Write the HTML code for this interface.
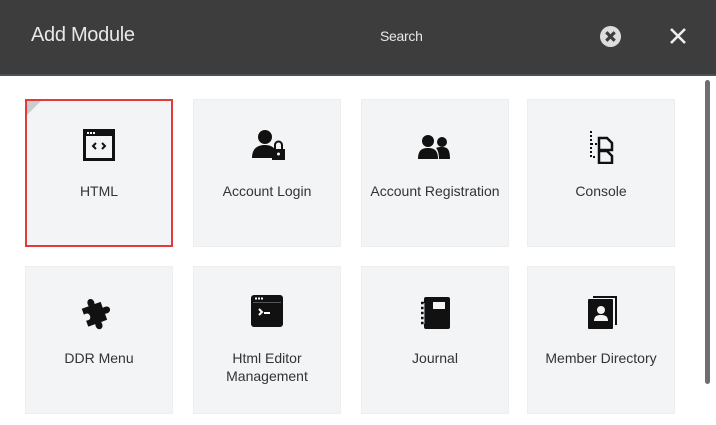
<!DOCTYPE html>
<html><head><style>
body{margin:0;width:716px;height:425px;background:#fff;overflow:hidden;font-family:"Liberation Sans",sans-serif;position:relative}
.hd{position:absolute;left:0;top:0;width:716px;height:74px;background:#3d3d3d;border-bottom:2px solid #4a5257}
.t{position:absolute;color:#e8e8e8}
.tile{position:absolute;width:148px;height:148px;background:#f3f4f5;border:1px solid #eceeef;box-sizing:border-box}
.tile svg{position:absolute;left:58px;top:28px}
.lb{position:absolute;left:0;width:100%;top:82px;text-align:center;font-size:14px;color:#333;line-height:18px}
.sel{border:2px solid #e53a3a}
.sb{position:absolute;left:705px;top:80px;width:5px;height:304px;background:#6e6e6e;border-radius:3px}
</style></head><body>
<div class="hd">
<div class="t" style="left:31px;top:24px;font-size:20px;letter-spacing:-0.3px">Add Module</div>
<div class="t" style="left:380px;top:28px;font-size:14px;letter-spacing:-0.3px">Search</div>
<svg style="position:absolute;left:600px;top:26px" width="21" height="21" viewBox="0 0 20 20"><circle cx="10" cy="10" r="10" fill="#ddd"/><path d="M6 6L14 14M14 6L6 14" stroke="#3d3d3d" stroke-width="3"/></svg>
<svg style="position:absolute;left:669px;top:27px" width="18" height="18" viewBox="0 0 18 18"><path d="M2 2L16 16M16 2L2 16" stroke="#eee" stroke-width="2.6"/></svg>
</div>
<div class="sb"></div>

<div class="tile sel" style="left:25px;top:99px"><div style="position:absolute;left:0;top:0;width:0;height:0;border-top:14px solid #ccc;border-right:14px solid transparent"></div>
<svg width="32" height="32" viewBox="0 0 32 32" style="left:56px;top:28px"><rect x="1.5" y="1.5" width="29" height="29" fill="none" stroke="#111" stroke-width="3"/><rect x="1" y="1" width="30" height="6" fill="#111"/><rect x="4" y="3" width="2" height="2" fill="#fff"/><rect x="7" y="3" width="2" height="2" fill="#fff"/><rect x="10" y="3" width="2" height="2" fill="#fff"/><path d="M13 14L10 17L13 20M19 14L22 17L19 20" stroke="#111" stroke-width="2" fill="none"/></svg>
<div class="lb" style="top:81px">HTML</div></div>

<div class="tile" style="left:193px;top:99px">
<svg width="36" height="34" viewBox="0 0 36 34"><circle cx="13" cy="9" r="7" fill="#111"/><path d="M0 30C0 20 6 17 13 17C18 17 22 19 23 22V30Z" fill="#111"/><rect x="20" y="21" width="13" height="11" fill="#111"/><path d="M23 21V17a3.5 3.5 0 0 1 7 0V21" stroke="#111" stroke-width="2" fill="none"/><circle cx="26.5" cy="26" r="1.5" fill="#f3f4f5"/></svg>
<div class="lb">Account Login</div></div>

<div class="tile" style="left:361px;top:99px">
<svg width="34" height="30" viewBox="0 0 34 30" style="left:56px;top:34px"><circle cx="10" cy="7" r="6" fill="#111"/><path d="M0 25C0 16 4 14 10 14S20 16 20 25Z" fill="#111"/><circle cx="24" cy="8" r="5" fill="#111"/><path d="M21 25C21 18 19 15 18 14C20 13 22 13 24 13C30 13 32 16 32 25Z" fill="#111"/></svg>
<div class="lb">Account Registration</div></div>

<div class="tile" style="left:527px;top:99px">
<svg width="30" height="34" viewBox="0 0 30 34" style="left:60px;top:30px"><path d="M3 1V27H9M3 14H9" stroke="#111" stroke-width="2" stroke-dasharray="2 2" fill="none"/><path d="M11 8H19L24 13V20H11Z M11 21H19L24 26V33H11Z" stroke="#111" stroke-width="2.5" fill="none"/></svg>
<div class="lb">Console</div></div>

<div class="tile" style="left:25px;top:266px">
<svg width="36" height="36" viewBox="0 0 34 34" style="left:55px;top:28px"><path d="M3 8H10C9 4 11 2 13 2S17 4 16 8H22V14C26 13 28 15 28 17S26 21 22 20V26H16C17 30 15 32 13 32S9 30 10 26H3V20C7 21 8 19 8 17S7 13 3 14Z" fill="#111" transform="rotate(-20 16 17)"/></svg>
<div class="lb">DDR Menu</div></div>

<div class="tile" style="left:193px;top:266px">
<svg width="32" height="32" viewBox="0 0 32 32" style="left:57px;top:28px"><rect x="0" y="0" width="32" height="32" rx="3" fill="#111"/><rect x="4" y="2.5" width="2" height="2" fill="#fff"/><rect x="7" y="2.5" width="2" height="2" fill="#fff"/><rect x="10" y="2.5" width="2" height="2" fill="#fff"/><rect x="2" y="7" width="28" height="1" fill="#555"/><path d="M8 14L11 17L8 20" stroke="#fff" stroke-width="2" fill="none"/><rect x="13" y="17" width="6" height="2" fill="#fff"/></svg>
<div class="lb">Html Editor<br>Management</div></div>

<div class="tile" style="left:361px;top:266px">
<svg width="32" height="34" viewBox="0 0 32 34" style="left:58px;top:29px"><rect x="4" y="1" width="26" height="32" rx="2" fill="#111"/><rect x="13" y="6" width="12" height="7" fill="#f3f4f5"/><path d="M1 7H7M1 12H7M1 17H7M1 22H7M1 27H7" stroke="#111" stroke-width="2.5"/><path d="M4 7V28" stroke="#f3f4f5" stroke-width="0.8"/></svg>
<div class="lb">Journal</div></div>

<div class="tile" style="left:527px;top:266px">
<svg width="32" height="34" viewBox="0 0 32 34" style="left:58px;top:29px"><path d="M7 1H30V29" stroke="#111" stroke-width="2" fill="none"/><rect x="2" y="3" width="25" height="30" rx="1" fill="#111"/><circle cx="15" cy="14" r="4" fill="#f3f4f5"/><path d="M8 25C8 20 11 19 15 19S22 20 22 25Z" fill="#f3f4f5"/></svg>
<div class="lb">Member Directory</div></div>
</body></html>
